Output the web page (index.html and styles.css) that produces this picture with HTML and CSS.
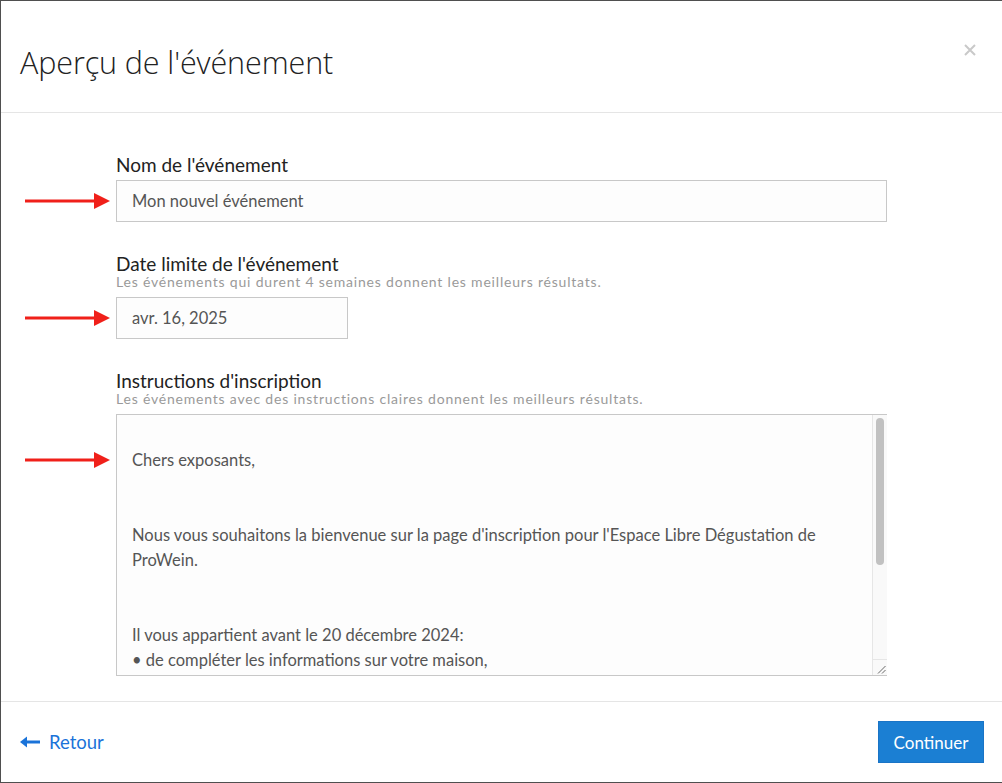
FILE: index.html
```html
<!DOCTYPE html>
<html lang="fr">
<head>
<meta charset="utf-8">
<title>Aperçu de l'événement</title>
<link rel="stylesheet" href="styles.css">
</head>
<body>
<div class="modal">
  <header class="modal-header">
    <h1 class="title">Aperçu de l'événement</h1>
    <button class="close" aria-label="Fermer">
      <svg width="12" height="12" viewBox="0 0 12 12"><path d="M1 1 L11 11 M11 1 L1 11" stroke="#c9c9c9" stroke-width="2" fill="none"/></svg>
    </button>
  </header>
  <main class="modal-body">
    <div class="field">
      <label class="label">Nom de l'événement</label>
      <div class="control">
        <svg class="pointer" width="86" height="16" viewBox="0 0 86 16"><path d="M0 8 H72" stroke="#f0201a" stroke-width="3"/><path d="M69 0 L85 8 L69 16 Z" fill="#f0201a"/></svg>
        <input class="input input-wide" type="text" value="Mon nouvel événement">
      </div>
    </div>
    <div class="field">
      <label class="label">Date limite de l'événement</label>
      <div class="hint">Les événements qui durent 4 semaines donnent les meilleurs résultats.</div>
      <div class="control">
        <svg class="pointer" width="86" height="16" viewBox="0 0 86 16"><path d="M0 8 H72" stroke="#f0201a" stroke-width="3"/><path d="M69 0 L85 8 L69 16 Z" fill="#f0201a"/></svg>
        <input class="input input-date" type="text" value="avr. 16, 2025">
      </div>
    </div>
    <div class="field">
      <label class="label">Instructions d'inscription</label>
      <div class="hint">Les événements avec des instructions claires donnent les meilleurs résultats.</div>
      <div class="control">
        <svg class="pointer pointer-area" width="86" height="16" viewBox="0 0 86 16"><path d="M0 8 H72" stroke="#f0201a" stroke-width="3"/><path d="M69 0 L85 8 L69 16 Z" fill="#f0201a"/></svg>
        <textarea class="textarea">

Chers exposants,


Nous vous souhaitons la bienvenue sur la page d'inscription pour l'Espace Libre Dégustation de
ProWein.


Il vous appartient avant le 20 décembre 2024:
• de compléter les informations sur votre maison,
• de sélectionner les vins que vous souhaitez présenter,
• de valider votre inscription.


Nous restons à votre disposition pour toute question.</textarea>
        <div class="scrollbar" aria-hidden="true">
          <div class="track"><div class="thumb"></div></div>
          <div class="corner">
            <svg width="9" height="9" viewBox="0 0 9 9"><path d="M1 8.5 L8.5 1 M5 8.5 L8.5 5" stroke="#444" stroke-width="0.8" fill="none"/></svg>
          </div>
        </div>
      </div>
    </div>
  </main>
  <footer class="modal-footer">
    <a class="back" href="#">
      <svg width="21" height="12" viewBox="0 0 21 12"><path d="M4 6 H20" stroke="#1a73d9" stroke-width="3"/><path d="M0 6 L7 0.5 L7 11.5 Z" fill="#1a73d9"/></svg>
      <span>Retour</span>
    </a>
    <button class="primary">Continuer</button>
  </footer>
</div>
</body>
</html>
```

FILE: styles.css
```css
html, body {
  margin: 0;
  padding: 0;
}
body {
  background: #4f4f4f;
  width: 1002px;
  height: 783px;
  overflow: hidden;
  font-family: Lato, "Noto Sans", sans-serif;
}
.modal {
  margin: 1px 0 0 1px;
  width: 1001px;
  height: 781px;
  background: #fff;
  display: flex;
  flex-direction: column;
}
.modal-header {
  height: 111px;
  border-bottom: 1px solid #e5e5e5;
  display: flex;
  align-items: center;
  justify-content: space-between;
  padding: 0 26px 0 19px;
  box-sizing: content-box;
}
.title {
  margin: 0;
  font-family: "Open Sans", sans-serif;
  font-weight: 300;
  font-size: 30.5px;
  color: #222;
  letter-spacing: -0.1px;
  padding-top: 10px;
}
.close {
  border: 0;
  background: none;
  padding: 0;
  display: flex;
  margin-top: -14px;
}
.modal-body {
  flex: 1;
  padding: 41px 114px 0 115px;
  display: flex;
  flex-direction: column;
  gap: 31px;
}
.field {
  display: flex;
  flex-direction: column;
}
.label {
  font-size: 19px;
  line-height: 22px;
  color: #222;
  margin-bottom: 4px;
}
.hint {
  font-size: 14px;
  line-height: 14px;
  color: #9a9a9a;
  letter-spacing: 0.8px;
  margin-top: -4px;
  margin-bottom: 8px;
}
.control {
  position: relative;
  display: flex;
}
.pointer {
  position: absolute;
  left: -91px;
  top: 13px;
}
.pointer-area {
  top: 38px;
}
.input {
  box-sizing: border-box;
  height: 42px;
  border: 1px solid #c8c8c8;
  background: #fdfdfd;
  padding: 0 15px;
  font-family: inherit;
  font-size: 16.5px;
  color: #555;
  outline: none;
}
.input-wide {
  width: 771px;
}
.input-date {
  width: 232px;
}
.textarea {
  box-sizing: border-box;
  width: 771px;
  height: 262px;
  border: 1px solid #c8c8c8;
  background: #fdfdfd;
  padding: 8px 30px 8px 15px;
  font-family: inherit;
  font-size: 16.5px;
  line-height: 25px;
  color: #555;
  resize: none;
  overflow: hidden;
  outline: none;
}
.scrollbar {
  position: absolute;
  top: 1px;
  bottom: 1px;
  left: 756px;
  width: 14px;
  display: flex;
  flex-direction: column;
  background: #f9f9f9;
  border-left: 1px solid #e6e6e6;
}
.track {
  flex: 1;
  padding: 3px 3px 0 3px;
}
.thumb {
  height: 147px;
  background: #c1c1c1;
  border-radius: 4px;
}
.corner {
  height: 14px;
  border-top: 1px solid #e6e6e6;
  display: flex;
  align-items: flex-end;
  justify-content: flex-end;
  padding: 0 1px 1px 0;
}
.modal-footer {
  height: 80px;
  border-top: 1px solid #e5e5e5;
  display: flex;
  align-items: center;
  justify-content: space-between;
  padding: 0 18px 0 19px;
}
.back {
  display: flex;
  align-items: center;
  gap: 8px;
  color: #1a73d9;
  text-decoration: none;
  font-size: 18.5px;
}
.primary {
  width: 106px;
  height: 42px;
  border: 1px solid #1a74c6;
  background: #1b7fd3;
  color: #fff;
  font-family: inherit;
  font-size: 17px;
  padding: 0;
}
```
